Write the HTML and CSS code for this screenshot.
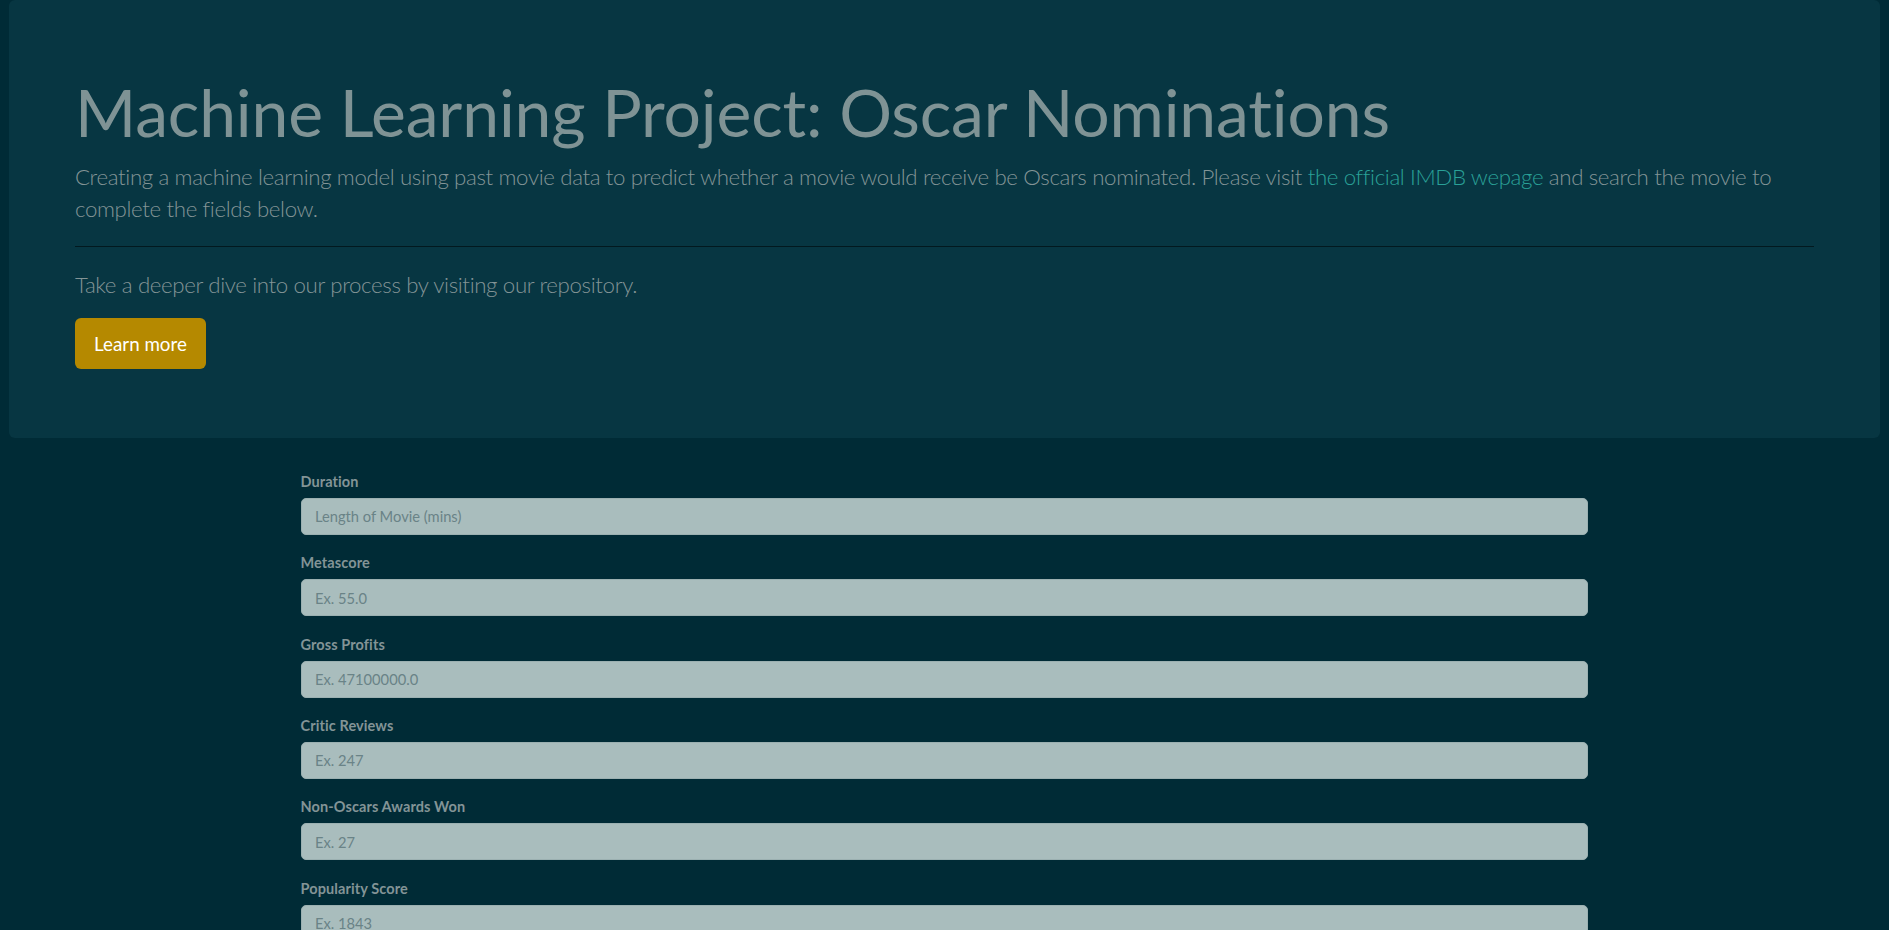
FILE: index.html
```html
<!DOCTYPE html>
<html lang="en">
<head>
<meta charset="utf-8">
<title>Oscar Nominations</title>
<link rel="stylesheet" href="styles.css">
</head>
<body>
<header class="jumbotron">
  <h1 class="display">Machine Learning Project: Oscar Nominations</h1>
  <p class="lead">Creating a machine learning model using past movie data to predict whether a movie would receive be Oscars nominated. Please visit <a href="#" class="link">the official IMDB wepage</a> and search the movie to complete the fields below.</p>
  <hr class="rule">
  <p class="lead">Take a deeper dive into our process by visiting our repository.</p>
  <a href="#" class="btn-warning">Learn more</a>
</header>
<main class="form-wrap">
  <form class="form">
    <div class="group">
      <label class="label" for="duration">Duration</label>
      <input class="input" id="duration" type="text" placeholder="Length of Movie (mins)">
    </div>
    <div class="group">
      <label class="label" for="metascore">Metascore</label>
      <input class="input" id="metascore" type="text" placeholder="Ex. 55.0">
    </div>
    <div class="group">
      <label class="label" for="gross">Gross Profits</label>
      <input class="input" id="gross" type="text" placeholder="Ex. 47100000.0">
    </div>
    <div class="group">
      <label class="label" for="critic">Critic Reviews</label>
      <input class="input" id="critic" type="text" placeholder="Ex. 247">
    </div>
    <div class="group">
      <label class="label" for="awards">Non-Oscars Awards Won</label>
      <input class="input" id="awards" type="text" placeholder="Ex. 27">
    </div>
    <div class="group">
      <label class="label" for="popularity">Popularity Score</label>
      <input class="input" id="popularity" type="text" placeholder="Ex. 1843">
    </div>
  </form>
</main>
</body>
</html>
```
FILE: styles.css
```css
html, body {
  margin: 0;
  padding: 0;
}
body {
  background: #002b36;
  color: #839496;
  font-family: Lato, "Open Sans", sans-serif;
  overflow: hidden;
  height: 930px;
}
.jumbotron {
  margin: 0 9px;
  padding: 72px 66px 69px 66px;
  background: #073642;
  border-radius: 6px;
}
.display {
  margin: 0;
  font-size: 66px;
  font-weight: 400;
  line-height: 1.2;
  color: #7f9395;
  letter-spacing: -0.15px;
}
.lead {
  margin: 10px 0 0 0;
  font-size: 22.3px;
  font-weight: 300;
  line-height: 32px;
  color: #839496;
  letter-spacing: -0.37px;
}
.link {
  color: #2aa198;
  text-decoration: none;
}
.rule {
  margin: 21px 0 22px 0;
  border: 0;
  border-top: 1px solid #02191f;
  height: 0;
}
.rule + .lead {
  margin-top: 0;
}
.btn-warning {
  display: inline-block;
  margin-top: 17px;
  width: 131px;
  height: 51px;
  line-height: 51px;
  text-align: center;
  background: #b58900;
  color: #fff;
  font-size: 18.8px;
  border-radius: 6px;
  text-decoration: none;
}
.form-wrap {
  display: flex;
  justify-content: center;
  padding-top: 33.6px;
}
.form {
  width: 1287px;
  margin-left: -1px;
}
.group {
  margin-bottom: 18.4px;
}
.label {
  display: block;
  font-size: 14.5px;
  font-weight: 700;
  line-height: 20px;
  margin-bottom: 6px;
  color: #839496;
  letter-spacing: 0.1px;
}
.input {
  display: block;
  box-sizing: border-box;
  width: 100%;
  height: 37px;
  padding: 0 13.5px;
  background: #a9bdbd;
  border: 1px solid #9bb0b1;
  border-radius: 5px;
  font-family: Lato, "Open Sans", sans-serif;
  font-size: 14.7px;
  color: #586e75;
  outline: none;
}
.input::placeholder {
  color: #6a8387;
}
```
